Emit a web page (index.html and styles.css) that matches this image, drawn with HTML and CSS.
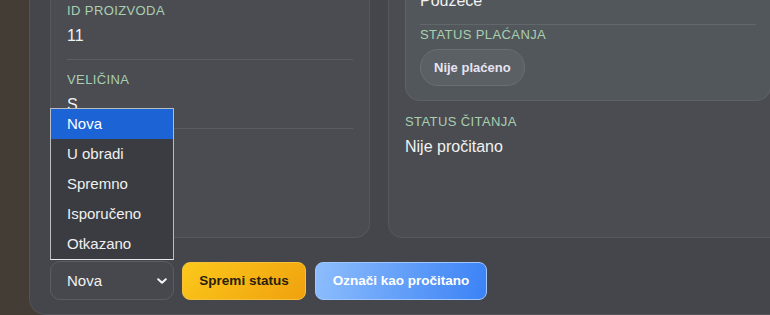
FILE: index.html
```html
<!DOCTYPE html>
<html lang="hr">
<head>
<meta charset="utf-8">
<title>Narudžba</title>
<link rel="stylesheet" href="styles.css">
</head>
<body>
<div class="panel">
  <div class="cards">
    <section class="card card-product">
      <div class="field">
        <div class="label">ID proizvoda</div>
        <div class="value">11</div>
      </div>
      <div class="field">
        <div class="label">Veličina</div>
        <div class="value">S</div>
      </div>
    </section>
    <section class="card">
      <div class="pay-card">
        <div class="pay-field">
          <div class="value">Pouzeće</div>
        </div>
        <div class="label pay-label">Status plaćanja</div>
        <span class="pill">Nije plaćeno</span>
      </div>
      <div class="read-block">
        <div class="label">Status čitanja</div>
        <div class="value">Nije pročitano</div>
      </div>
    </section>
  </div>
  <div class="actions">
    <div class="select-wrap">
      <ul class="options">
        <li class="option active">Nova</li>
        <li class="option">U obradi</li>
        <li class="option">Spremno</li>
        <li class="option">Isporučeno</li>
        <li class="option">Otkazano</li>
      </ul>
      <div class="select">
        <span>Nova</span>
        <svg class="chev" width="10" height="6" viewBox="0 0 10 6"><path d="M1.2 1.2 5 4.8 8.8 1.2" fill="none" stroke="#f4f4f4" stroke-width="2" stroke-linecap="round" stroke-linejoin="round"/></svg>
      </div>
    </div>
    <button class="btn btn-save">Spremi status</button>
    <button class="btn btn-read">Označi kao pročitano</button>
  </div>
</div>
</body>
</html>
```
FILE: styles.css
```css
html, body {
  margin: 0;
  padding: 0;
}
body {
  width: 770px;
  height: 315px;
  overflow: hidden;
  background: linear-gradient(90deg, #443d35 0%, #3f3a34 60%, #3a3938 100%);
  font-family: "Liberation Sans", Arial, sans-serif;
  color: #f2f2f2;
}
.panel {
  margin: -85px 0 0 29px;
  width: 800px;
  padding: 20px 0 14px 20px;
  background: #44464b;
  border: 1px solid #52545a;
  border-radius: 16px;
}
.cards {
  display: grid;
  grid-template-columns: 320px 400px;
  gap: 18px;
}
.card {
  background: #4a4c51;
  border: 1px solid #56585d;
  border-radius: 14px;
  padding: 16px 16px 40px;
}
.card-product {
  padding: 54px 16px 108px;
}
.field {
  padding: 12px 1px 13px 0;
  border-bottom: 1px solid #5b5d62;
}
.label {
  font-size: 13px;
  line-height: 16px;
  letter-spacing: 0.4px;
  text-transform: uppercase;
  color: #a9cfb1;
  margin-bottom: 7px;
}
.value {
  font-size: 16px;
  line-height: 20px;
  color: #f2f2f2;
}
.pay-card {
  background: #51575a;
  border: 1px solid #5d6366;
  border-radius: 14px;
  padding: 37px 14px 14px;
}
.pay-field {
  padding-bottom: 13px;
  border-bottom: 1px solid #61676a;
}
.pay-label {
  margin: 2px 0 6px;
}
.pill {
  display: inline-block;
  height: 35px;
  line-height: 35px;
  padding: 0 13px;
  border-radius: 18px;
  background: #5b6065;
  border: 1px solid #6a6f74;
  font-size: 13px;
  font-weight: bold;
  color: #e6e4f2;
}
.read-block {
  margin-top: 13px;
}
.read-block .label {
  margin-bottom: 7px;
}
.actions {
  display: flex;
  align-items: center;
  gap: 8px;
  margin-top: 23px;
}
.select-wrap {
  position: relative;
}
.select {
  box-sizing: border-box;
  width: 124px;
  height: 39px;
  display: flex;
  align-items: center;
  justify-content: space-between;
  padding: 0 6px 0 16px;
  background: #46484d;
  border: 1px solid #5a5d62;
  border-radius: 10px;
  font-size: 15px;
  color: #f2f2f2;
}
.chev {
  display: block;
}
.options {
  position: absolute;
  left: 0;
  bottom: calc(100% + 1px);
  width: 124px;
  box-sizing: border-box;
  margin: 0;
  padding: 0;
  list-style: none;
  background: #3a3c41;
  border: 1px solid #b9bcc0;
  border-bottom-color: #e8e8e8;
}
.option {
  height: 30px;
  line-height: 30px;
  padding-left: 16px;
  font-size: 15px;
  color: #f0f0f0;
}
.option.active {
  background: #1c64d6;
  color: #ffffff;
}
.btn {
  height: 38px;
  border-radius: 8px;
  font-family: "Liberation Sans", Arial, sans-serif;
  font-size: 13.5px;
  font-weight: bold;
  cursor: pointer;
}
.btn-save {
  width: 124px;
  background: linear-gradient(135deg, #fbc81b 0%, #f0a10e 100%);
  border: 1px solid #f7c23a;
  color: #2a1e0c;
}
.btn-read {
  width: 172px;
  margin-left: 1px;
  background: linear-gradient(100deg, #8dbdfc 0%, #3b82f6 100%);
  border: 1px solid #9fc6ff;
  color: #ffffff;
}
```
